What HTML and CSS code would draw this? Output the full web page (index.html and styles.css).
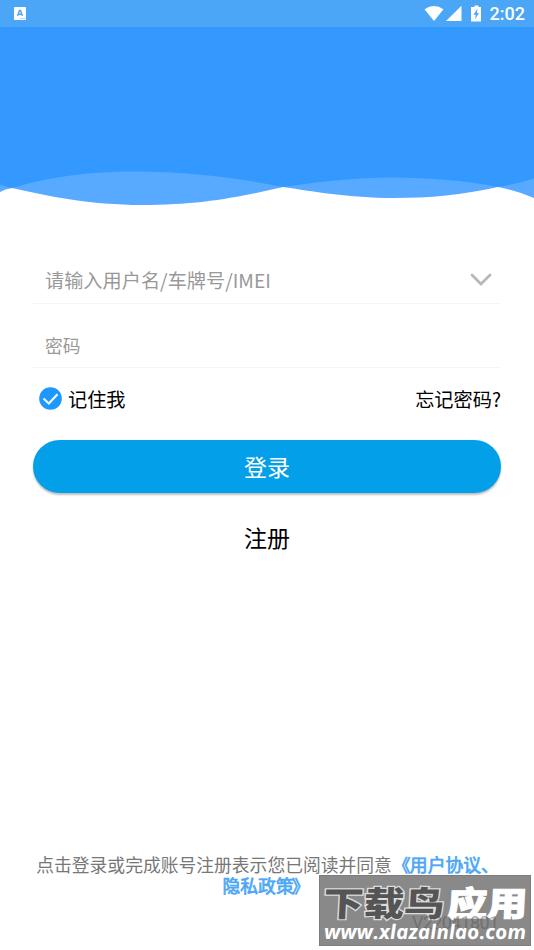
FILE: index.html
```html
<!DOCTYPE html>
<html lang="zh-CN">
<head>
<meta charset="utf-8">
<title>登录</title>
<link rel="stylesheet" href="styles.css">
</head>
<body>
<div class="screen">
  <div class="status">
    <svg class="app-icon" width="12" height="13" viewBox="0 0 12 13"><rect width="12" height="13" rx=".7" fill="#fff"/><path d="M3.5 9 5.5 3.5h1L8.500 9M4.200 7.200h3.600" fill="none" stroke="#4ba6f7" stroke-width="1.400"/><path d="M6 11.500h5" stroke="#9ccdfb" stroke-dasharray="1.500 .5"/></svg>
    <div class="indicators">
      <svg width="58" height="18" viewBox="0 0 58 18"><path d="M-.5 4.300Q9-2.300 18.500 4.300L9 16Z" fill="#fff"/><path d="M36.500.7V16H21Z" fill="#fff"/><path d="M49.500.5h4V2H56v14.500h-10V2h3.500Z" fill="#fff"/><path d="M52.500 3.500 48.500 9.700h2.300l-.8 4.500L54 8h-2.200Z" fill="#4ba6f7"/></svg>
      <span class="clock">2:02</span>
    </div>
  </div>
  <svg class="waves" width="534" height="182" viewBox="0 27 534 182">
    <path d="M0 27H534V198C522 193 508 189 498 187C462 195 430 198 393 198C350 198 310 191 283 187C240 197 200 205 142 205C90 205 48 196 12 188Q5 189 0 192Z" fill="#57aaff"/>
    <path d="M0 27H534V178.500Q517 184 498 187C468 181 430 177.500 393 177.500C350 177.500 312 183 283 187C238 178 190 171.500 135 171.500C85 171.500 45 178 12 188Q6 187 0 184.500Z" fill="#3399ff"/>
  </svg>
  <main class="form">
    <div class="field account"><span>请输入用户名/车牌号/IMEI</span>
      <svg width="22" height="14" viewBox="0 0 22 14"><path d="M2 2 11 11 20 2" fill="none" stroke="#b8b8b8" stroke-width="2.800" stroke-linecap="round"/></svg>
    </div>
    <div class="field password"><span>密码</span></div>
    <div class="options">
      <div class="remember">
        <svg width="23" height="23" viewBox="0 0 23 23"><circle cx="11.500" cy="11.500" r="11.300" fill="#1c98ff"/><path d="M4.500 11.500 9.800 16.500 18.500 7.200" fill="none" stroke="#fff" stroke-width="2"/></svg>
        <span>记住我</span>
      </div>
      <span>忘记密码?</span>
    </div>
    <div class="login">登录</div>
    <div class="register">注册</div>
  </main>
  <footer class="terms">点击登录或完成账号注册表示您已阅读并同意<b><span class="open">《</span>用户协议、<br>隐私政策<span class="close">》</span></b></footer>
  <svg class="watermark" width="212" height="72" viewBox="0 0 212 72">
    <rect x=".5" y=".5" width="211" height="70" fill="#898989" stroke="#7c7c7c"/>
    <g class="brand" transform="skewX(-3)">
      <text class="brand-dark" x="6" y="41" textLength="121" lengthAdjust="spacingAndGlyphs">下载鸟</text>
      <text class="brand-light" x="130" y="41" textLength="80" lengthAdjust="spacingAndGlyphs">应用</text>
    </g>
    <text class="ghost" x="93" y="54" textLength="87">V22041801</text>
    <text class="site" transform="translate(-3 0) skewX(4)" x="4" y="64" textLength="202" lengthAdjust="spacingAndGlyphs">www.xlazalnlao.com</text>
  </svg>
</div>
</body>
</html>
```
FILE: styles.css
```css
body { margin: 0; background: #fff; }
.screen {
  position: relative;
  display: flex;
  flex-direction: column;
  width: 534px;
  height: 950px;
  overflow: hidden;
  font-family: "Noto Sans CJK SC", sans-serif;
  font-size: 19.200px;
  color: #000;
}
.status {
  display: flex;
  justify-content: space-between;
  align-items: center;
  box-sizing: border-box;
  height: 27px;
  flex: none;
  padding: 0 9px 0 14px;
  background: #4ba6f7;
}
.indicators { display: flex; align-items: center; gap: 7px; }
.indicators svg { overflow: visible; }
.clock { color: #fff; font-family: Roboto, sans-serif; font-size: 18px; font-weight: 500; line-height: 27px; }
.waves { display: block; flex: none; }
.form { display: flex; flex-direction: column; padding: 0 33px; margin-top: 48px; }
.field {
  display: flex;
  justify-content: space-between;
  align-items: center;
  box-sizing: border-box;
  padding: 0 9px 0 12px;
  border-bottom: 1px solid #f5f5f5;
  color: #999;
}
.account { height: 47px; padding-bottom: 1px; }
.password { height: 64px; padding-top: 18px; font-size: 17.800px; }
.options { display: flex; justify-content: space-between; align-items: center; height: 61px; }
.remember { display: flex; align-items: center; gap: 6px; padding-left: 6px; }
.login {
  height: 53px;
  margin-top: 11px;
  border-radius: 27px;
  background: #03a0e9;
  box-shadow: 0 2px 2px rgba(0, 0, 0, .25);
  color: #fff;
  font-size: 23px;
  line-height: 52px;
  text-align: center;
}
.register { margin-top: 27px; font-size: 23px; line-height: 34px; text-align: center; }
.terms {
  margin-top: 300px;
  padding-left: 1px;
  color: #777;
  font-size: 17.800px;
  line-height: 21px;
  text-align: center;
  white-space: nowrap;
}
.terms b { color: #4ba6f7; font-weight: 400; -webkit-text-stroke: .7px #4ba6f7; }
.open { display: inline-block; width: 18px; text-align: right; line-height: 20px; text-indent: 1px; }
.close { margin: 0 3px 0 -2px; }
.watermark { position: absolute; left: 319px; top: 875px; }
.ghost { fill: #555; fill-opacity: .5; font-family: Roboto, sans-serif; font-size: 18px; }
.brand { font-size: 34px; font-weight: 900; }
.brand-dark { fill: #555; stroke: #ddd; stroke-width: 2.500px; paint-order: stroke; }
.brand-light { fill: #fff; stroke: #fff; stroke-width: 1px; }
.site { fill: #fff; font-family: "Open Sans", sans-serif; font-size: 20px; font-style: italic; font-weight: 700; }
```
